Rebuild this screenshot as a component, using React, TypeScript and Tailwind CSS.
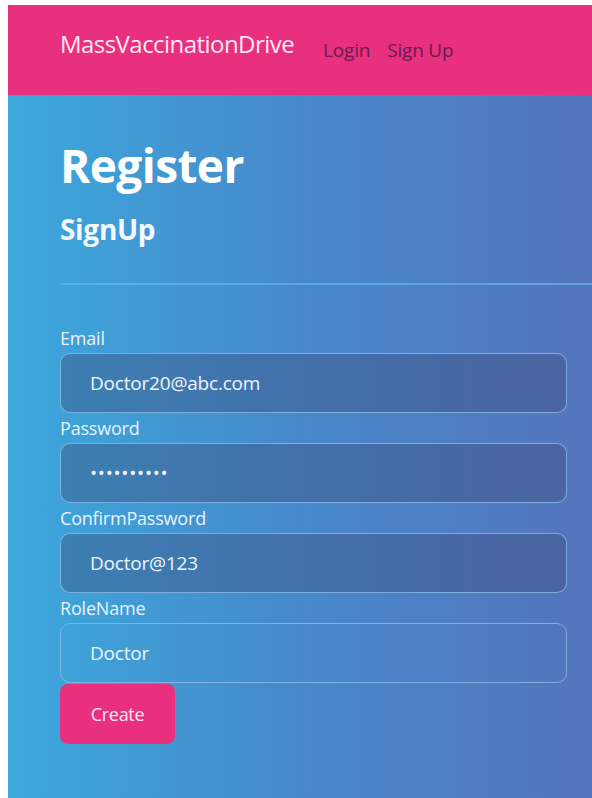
import React from 'react';

type Field = {
  label: string;
  value: string;
  type?: string;
  filled?: boolean;
};

const fields: Field[] = [
  { label: 'Email', value: 'Doctor20@abc.com', filled: true },
  { label: 'Password', value: 'Doctor@123', type: 'password', filled: true },
  { label: 'ConfirmPassword', value: 'Doctor@123', filled: true },
  { label: 'RoleName', value: 'Doctor' },
];

export default function App() {
  return (
    <div
      className="min-h-[798px] bg-white pl-[8px] pt-[5px]"
      style={{ fontFamily: '"Open Sans", "Noto Sans", sans-serif' }}
    >
      {/* Top nav */}
      <nav className="h-[90px] bg-[#e8307f] flex items-start pl-[52px] pt-[23px]">
        <span className="text-[24px] leading-[32px] text-[#fde7f1] tracking-[-0.55px]">
          MassVaccinationDrive
        </span>
        <div className="ml-[29px] mt-[9px] flex gap-[17px] text-[19px] leading-[26px] text-[#6c1a50] tracking-[-0.2px]">
          <a href="#">Login</a>
          <a href="#">Sign Up</a>
        </div>
      </nav>

      {/* Form area */}
      <main className="min-h-[703px] bg-gradient-to-r from-[#3ba8dc] via-[#4689cb] to-[#5474bc] pl-[52px] pt-[40px]">
        <h1 className="text-[46px] font-bold text-white leading-[60px] tracking-[-0.6px]">Register</h1>
        <h4 className="mt-[17px] text-[28px] font-bold text-[#f4f8ff] leading-[34px] tracking-[-0.3px]">
          SignUp
        </h4>
        <hr className="mt-[37px] border-0 border-t-2 border-[#63b8e8]/70" />

        <form className="mt-[38px] pr-[25px]">
          {fields.map((f) => (
            <div key={f.label}>
              <label className="block text-[18px] text-[#e8f3ff] leading-[30px] tracking-[-0.2px]">
                {f.label}
              </label>
              <input
                readOnly
                type={f.type ?? 'text'}
                value={f.value}
                className={`w-full h-[60px] rounded-[10px] border border-[#8cbcea]/80 px-[29px] text-[19px] text-[#eef5ff] outline-none ${
                  f.type === 'password' ? 'tracking-[0.7px]' : 'tracking-[-0.2px]'
                } ${f.filled ? 'bg-[#3b4a78]/40' : 'bg-transparent'}`}
              />
            </div>
          ))}
          <button
            type="button"
            className="mt-[1px] h-[60px] w-[115px] rounded-[8px] bg-[#e8307f] text-[18px] text-[#fde7f1] tracking-[-0.3px]"
          >
            Create
          </button>
        </form>
      </main>
    </div>
  );
}
